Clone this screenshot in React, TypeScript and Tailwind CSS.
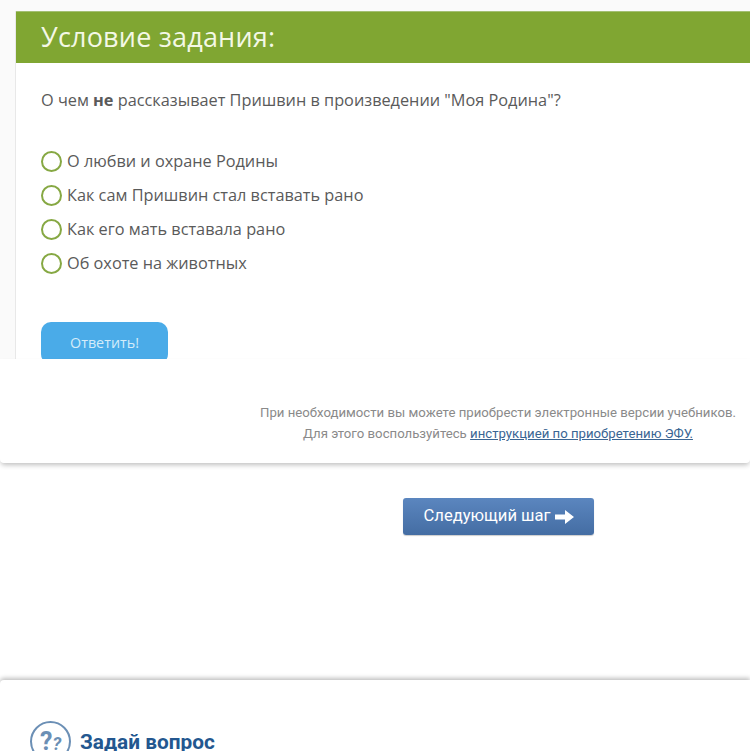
import React from "react";

const options = [
  "О любви и охране Родины",
  "Как сам Пришвин стал вставать рано",
  "Как его мать вставала рано",
  "Об охоте на животных",
];

const App = () => {
  return (
    <div className="w-[750px] h-[751px] overflow-hidden bg-white font-['Open_Sans',sans-serif]">
      {/* Task iframe area */}
      <div className="h-[359px] overflow-hidden bg-[#fafafa] pl-[15px] pt-[11px]">
        <div className="h-[400px] bg-white border-l border-[#e8e8e8]">
          <div className="h-[52px] bg-[#80a632] border-t border-[#a3bf72] pl-[25px] pb-[2px] flex items-center">
            <h2 className="text-[27px] leading-none text-[#f4f8e6] tracking-[0.2px]">Условие задания:</h2>
          </div>

          <p className="mt-[27px] pl-[25px] text-[16.3px] leading-5 text-[#5a5a5a]">
            О чем <b className="font-bold">не</b> рассказывает Пришвин в произведении "Моя Родина"?
          </p>

          <div className="mt-[41px] pl-[25px] flex flex-col gap-[14px]">
            {options.map((text) => (
              <label key={text} className="flex items-center h-5 gap-[5px] text-[16.3px] text-[#5a5a5a]">
                <span className="w-[21px] h-[21px] shrink-0 rounded-full border-[2.5px] border-[#86a843] bg-white" />
                {text}
              </label>
            ))}
          </div>

          <button className="mt-[49px] ml-[25px] w-[127px] h-[42px] rounded-[10px] bg-[#4aabe8] text-[#d4ecfa] text-[14.3px]">
            Ответить!
          </button>
        </div>
      </div>

      {/* EFU note */}
      <div className="h-[104px] bg-white rounded-b-[4px] shadow-[0_3px_5px_-1px_rgba(0,0,0,0.25)] pt-[43px] pr-[13px] flex flex-col items-end relative font-['Roboto',sans-serif]">
        <div className="w-[478px] text-center text-[13.2px] leading-[21px] text-[#8a8a8a]">
          <p className="whitespace-nowrap">При необходимости вы можете приобрести электронные версии учебников.</p>
          <p className="whitespace-nowrap">
            Для этого воспользуйтесь{" "}
            <a href="#" className="underline text-[#3a6593]">инструкцией по приобретению ЭФУ.</a>
          </p>
        </div>
      </div>

      {/* Next step */}
      <div className="mt-[35px] pl-[403px]">
        <button className="w-[191px] h-[37px] rounded-[3px] bg-gradient-to-b from-[#5b86bf] to-[#446da3] text-white text-[16.6px] font-['Roboto',sans-serif] flex items-center justify-center gap-[4px] shadow-[0_1px_1px_rgba(0,0,0,0.2)]">
          Следующий шаг
          <svg width="19" height="14" viewBox="0 0 19 14" fill="#fff">
            <path d="M0 4.5h10V0l9 7-9 7V9.5H0z" />
          </svg>
        </button>
      </div>

      {/* Ask a question */}
      <div className="mt-[145px] h-[80px] bg-white rounded-tl-[4px] shadow-[0_-2px_4px_rgba(0,0,0,0.25)] pt-[41px] pl-[30px] flex items-start gap-[9px]">
        <div className="w-[41px] h-[41px] shrink-0 rounded-full border-2 border-[#6b8fb5] flex items-center justify-center text-[#6b8fb5] font-bold font-['Roboto',sans-serif]">
          <span className="text-[25px] leading-none">?</span>
          <span className="text-[18px] leading-none mt-1 italic">?</span>
        </div>
        <h3 className="mt-[9px] text-[20.8px] leading-6 font-bold text-[#23578f] font-['Roboto',sans-serif]">Задай вопрос</h3>
      </div>
    </div>
  );
};

export default App;
